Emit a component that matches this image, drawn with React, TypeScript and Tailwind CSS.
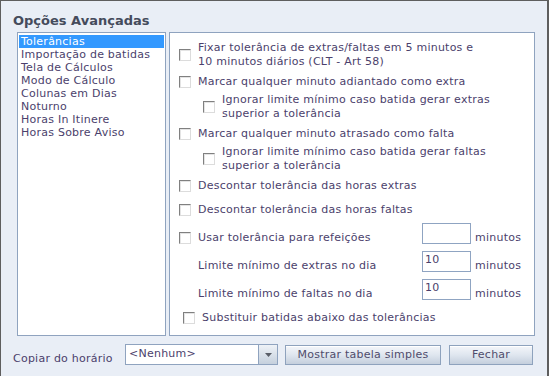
import React from 'react';

const FONT = { fontFamily: '"DejaVu Sans", Verdana, sans-serif' };

const menuItems = [
  'Tolerâncias',
  'Importação de batidas',
  'Tela de Cálculos',
  'Modo de Cálculo',
  'Colunas em Dias',
  'Noturno',
  'Horas In Itinere',
  'Horas Sobre Aviso',
];

function Box() {
  return (
    <div className="w-[12px] h-[12px] shrink-0 bg-white border border-t-[#808080] border-l-[#808080] border-b-[#dcdcdc] border-r-[#dcdcdc] shadow-[inset_1px_1px_0_#e4e4e4]" />
  );
}

function Check({ lines, className = '' }: { lines: string[]; className?: string }) {
  return (
    <div className={`flex items-center gap-[7px] ${className}`}>
      <Box />
      <div className="leading-[14px]">
        {lines.map((l) => (
          <div key={l}>{l}</div>
        ))}
      </div>
    </div>
  );
}

function NumInput({ value }: { value?: string }) {
  return (
    <div className="w-[49px] h-[21px] self-start bg-white border border-[#8fa4c2] pl-[2px] pt-[1px] leading-[14px]">
      {value}
    </div>
  );
}

function Btn({ label, className = '' }: { label: string; className?: string }) {
  return (
    <button
      className={`h-[20px] border border-[#8ea2bd] bg-gradient-to-b from-[#f4f6fa] via-[#dfe6ef] to-[#c4cfdd] shadow-[inset_0_1px_0_#ffffff] text-[#4f4c6c] leading-[14px] ${className}`}
    >
      {label}
    </button>
  );
}

export default function App() {
  return (
    <div
      style={FONT}
      className="w-[549px] h-[376px] bg-[#e9eef6] border-t border-l border-r-2 border-[#5e5e5e] text-[11px] tracking-[0.24px] text-[#4b3f6c] overflow-hidden"
    >
      {/* Title */}
      <div className="ml-[12px] mt-[12px] h-[16px] leading-[16px] text-[13px] tracking-normal font-bold text-[#454b5c]">
        Opções Avançadas
      </div>

      <div className="flex mt-[3px] ml-[16px] h-[304px]">
        {/* List */}
        <div className="w-[149px] h-full bg-white border border-[#8fa3bf] p-[1px] pt-[2px]">
          {menuItems.map((m, i) => (
            <div
              key={m}
              className={`h-[13px] leading-[13px] pl-[2px] whitespace-nowrap ${
                i === 0 ? 'bg-[#3399ff] text-white' : ''
              }`}
            >
              {m}
            </div>
          ))}
        </div>

        {/* Options */}
        <div className="ml-[3px] w-[366px] h-full bg-white border border-[#8fa3bf] pl-[9px] pt-[8px]">
          <Check lines={['Fixar tolerância de extras/faltas em 5 minutos e', '10 minutos diários (CLT - Art 58)']} />
          <Check className="mt-[6px]" lines={['Marcar qualquer minuto adiantado como extra']} />
          <Check
            className="mt-[4px] ml-[24px]"
            lines={['Ignorar limite mínimo caso batida gerar extras', 'superior a tolerância']}
          />
          <Check className="mt-[6px]" lines={['Marcar qualquer minuto atrasado como falta']} />
          <Check
            className="mt-[4px] ml-[24px]"
            lines={['Ignorar limite mínimo caso batida gerar faltas', 'superior a tolerância']}
          />
          <Check className="mt-[6px]" lines={['Descontar tolerância das horas extras']} />
          <Check className="mt-[10px]" lines={['Descontar tolerância das horas faltas']} />

          <div className="flex items-end h-[22px] mt-[6px]">
            <div className="w-[243px] flex items-center gap-[7px]">
              <Box />
              <span className="leading-[14px]">Usar tolerância para refeições</span>
            </div>
            <NumInput />
            <span className="ml-[4px] leading-[14px]">minutos</span>
          </div>
          <div className="flex items-end h-[22px] mt-[6px]">
            <div className="w-[243px] pl-[19px] leading-[14px]">Limite mínimo de extras no dia</div>
            <NumInput value="10" />
            <span className="ml-[4px] leading-[14px]">minutos</span>
          </div>
          <div className="flex items-end h-[22px] mt-[6px]">
            <div className="w-[243px] pl-[19px] leading-[14px]">Limite mínimo de faltas no dia</div>
            <NumInput value="10" />
            <span className="ml-[4px] leading-[14px]">minutos</span>
          </div>

          <Check className="mt-[10px] ml-[4px] gap-[6px]" lines={['Substituir batidas abaixo das tolerâncias']} />
        </div>
      </div>

      {/* Bottom bar */}
      <div className="flex items-end h-[21px] mt-[8px] ml-[12px]">
        <span className="w-[112px] leading-[14px] translate-y-[1px]">Copiar do horário</span>
        <div className="flex w-[153px] h-[21px] bg-white border border-[#8fa3bf]">
          <div className="flex-1 pl-[3px] pt-[2px] leading-[14px]">&lt;Nenhum&gt;</div>
          <div className="w-[19px] h-full border-l border-[#8fa3bf] bg-gradient-to-b from-[#eef2f7] to-[#c5d0dd] flex items-center justify-center">
            <svg width="7" height="4" viewBox="0 0 7 4">
              <path d="M0 0h7L3.5 4z" fill="#5a5e68" />
            </svg>
          </div>
        </div>
        <Btn label="Mostrar tabela simples" className="ml-[7px] w-[156px]" />
        <Btn label="Fechar" className="ml-[8px] w-[84px]" />
      </div>
    </div>
  );
}
